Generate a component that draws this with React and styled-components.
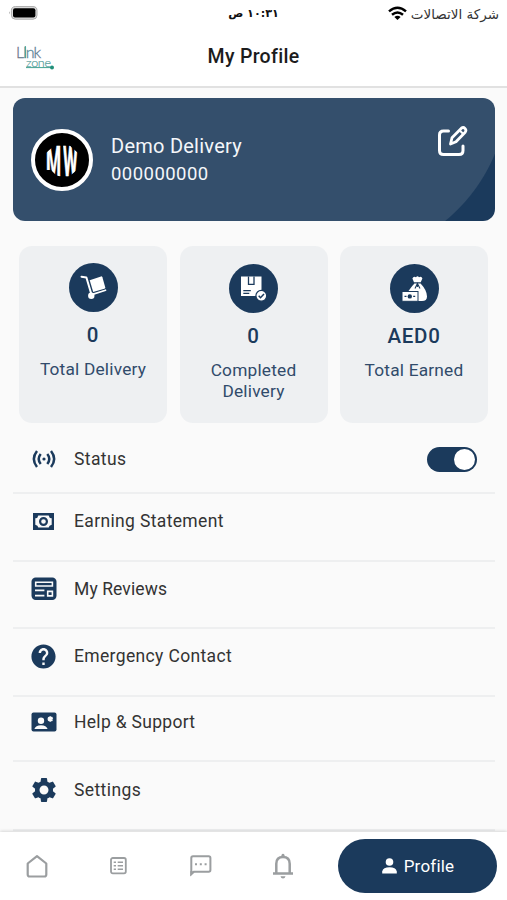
import React, { useState } from 'react';
import styled, { createGlobalStyle } from 'styled-components';
import { MdHelp, MdSettings } from 'react-icons/md';

const NAVY = '#1b3a5c';

const GlobalStyle = createGlobalStyle`
  * {
    box-sizing: border-box;
  }

  body {
    margin: 0;
    background: #fafafa;
    font-family: Roboto, 'DejaVu Sans', sans-serif;
  }

  svg {
    display: block;
    flex-shrink: 0;
  }
`;

const Screen = styled.div`
  width: 507px;
  height: 900px;
  display: flex;
  flex-direction: column;
  background: #fafafa;
  overflow: hidden;
`;

const Header = styled.header`
  height: 88px;
  background: #fff;
  border-bottom: 2px solid #e1e1e1;
  flex-shrink: 0;
`;

const StatusBar = styled.div`
  height: 27px;
  display: grid;
  grid-template-columns: 1fr auto 1fr;
  align-items: center;
  padding: 0 8px;
`;

const Clock = styled.span`
  color: #111;
  font: 700 11.2px 'DejaVu Sans', sans-serif;
  white-space: nowrap;
`;

const Carrier = styled.div`
  display: flex;
  align-items: center;
  justify-content: flex-end;
  gap: 4px;
  color: #333;
  font: 13.5px 'DejaVu Sans', sans-serif;
  white-space: nowrap;
`;

const TitleBar = styled.div`
  height: 59px;
  display: grid;
  grid-template-columns: 1fr auto 1fr;
  align-items: center;
  padding: 0 14px;
`;

const Title = styled.h1`
  margin: 0;
  color: #1c1c1c;
  font-size: 19.5px;
  font-weight: 500;
  letter-spacing: 0.3px;
`;

const ProfileCard = styled.section`
  height: 123px;
  margin: 10px 12px 0 13px;
  padding: 0 27px 0 18px;
  display: flex;
  align-items: center;
  border-radius: 12px;
  background:
    linear-gradient(#344f6c, #344f6c) 0 0 / 325px 100% no-repeat,
    radial-gradient(circle at 323px -10px, #344f6c 171.5px, ${NAVY} 172.5px);
  flex-shrink: 0;
`;

const Avatar = styled.div`
  width: 62px;
  height: 62px;
  border: 4px solid #fff;
  border-radius: 50%;
  background: #000;
  display: flex;
  align-items: center;
  justify-content: center;
`;

const Identity = styled.div`
  flex: 1;
  padding: 2px 0 0 18px;
  color: #f4f7fa;
`;

const Name = styled.div`
  font-size: 20px;
  line-height: 27px;
  letter-spacing: 0.25px;
`;

const Phone = styled.div`
  font-size: 18.5px;
  line-height: 28px;
  letter-spacing: 0.45px;
`;

const EditButton = styled.button`
  align-self: flex-start;
  margin-top: 27px;
  padding: 0;
  border: 0;
  background: none;
`;

const Stats = styled.section`
  display: grid;
  grid-template-columns: repeat(3, 148px);
  gap: 12.5px;
  padding: 25px 0 0 19px;
  flex-shrink: 0;
`;

const StatCard = styled.div`
  height: 177px;
  padding-top: ${props => props.$top || 18}px;
  display: flex;
  flex-direction: column;
  align-items: center;
  border-radius: 13px;
  background: #eef0f2;
  color: ${NAVY};
  text-align: center;
`;

const StatValue = styled.div`
  margin-top: 10px;
  font-size: 20.5px;
  font-weight: 500;
  line-height: 26px;
  letter-spacing: 0.7px;
`;

const StatLabel = styled.div`
  margin-top: 11px;
  color: #314b6b;
  font-size: 17.3px;
  line-height: 21px;
  letter-spacing: 0.2px;
`;

const Menu = styled.main`
  padding: 0 12px 0 13px;
  flex-shrink: 0;
`;

const MenuRow = styled.div`
  height: ${props => props.$height}px;
  padding: ${props => props.$top}px 18px 0 17px;
  display: flex;
  align-items: flex-start;
  border-bottom: 2px solid #eeeff0;
  color: #333;
`;

const RowIcon = styled.div`
  width: 27px;
  height: 28px;
  display: flex;
  align-items: center;
  justify-content: center;
  color: ${NAVY};
`;

const RowLabel = styled.div`
  flex: 1;
  padding-left: 17px;
  font-size: 17.5px;
  line-height: 28px;
  letter-spacing: ${props => props.$spacing}px;
`;

const Switch = styled.button`
  width: 50px;
  height: 25px;
  margin-top: 2px;
  padding: 2px;
  display: flex;
  justify-content: ${props => (props.$on ? 'flex-end' : 'flex-start')};
  border: 0;
  border-radius: 13px;
  background: ${props => (props.$on ? NAVY : '#b6bdc5')};
`;

const Knob = styled.span`
  width: 21px;
  height: 21px;
  border-radius: 50%;
  background: #fff;
`;

const BottomNav = styled.nav`
  height: 68px;
  margin-top: auto;
  padding: 0 10px 1px 26px;
  display: flex;
  align-items: center;
  background: #fff;
  box-shadow: 0 -1px 3px rgba(0, 0, 0, 0.14);
  color: #9b9ea0;
  flex-shrink: 0;
`;

const NavItem = styled.div`
  width: ${props => props.$width}px;
  flex-shrink: 0;
`;

const ProfileTab = styled.button`
  width: 159px;
  height: 54px;
  padding: 0 0 0 1px;
  display: flex;
  align-items: center;
  justify-content: center;
  gap: 7px;
  border: 0;
  border-radius: 27px;
  background: ${NAVY};
  color: #fff;
  font: 400 17px Roboto, sans-serif;
  letter-spacing: 0.2px;
`;

const Battery = () => (
  <svg width="30" height="16" viewBox="0 0 30 16">
    <path d="M2 5.2Q.2 6.7 2 8.2Z" fill="#aaa" />
    <rect x="3.4" y=".6" width="25.6" height="12.6" rx="4" fill="#ddd" stroke="#aaa" />
    <rect x="5" y="2.2" width="22.4" height="9.4" rx="2" fill="#000" />
  </svg>
);

const Wifi = () => (
  <svg width="19" height="16" viewBox="0 0 19 16">
    <g fill="none" stroke="#000" strokeWidth="2.5">
      <path d="M1 5.4Q9.5-1.8 18 5.4" />
      <path d="M4 8.8Q9.5 4.1 15 8.8" />
    </g>
    <path d="M6.4 11Q9.5 8.6 12.6 11L9.5 14Z" fill="#000" />
  </svg>
);

const Logo = () => (
  <svg width="44" height="34" viewBox="0 0 44 34" fontFamily="Lato, sans-serif" fontWeight="300">
    <defs>
      <linearGradient id="word" x1="0" x2="1">
        <stop offset="0" stopColor="#777589" />
        <stop offset=".55" stopColor="#528798" />
        <stop offset="1" stopColor="#66778f" />
      </linearGradient>
    </defs>
    <text x="2" y="17.5" fontSize="16" textLength="25" fill="url(#word)" stroke="url(#word)" strokeWidth=".3">LInk</text>
    <text x="12" y="27" fontSize="12.5" textLength="25" fill="#529b98" stroke="#529b98" strokeWidth=".2">zone</text>
    <path d="M11.3 6v12M12 27.6h25" fill="none" stroke="#40a391" strokeWidth="1" />
    <circle cx="38" cy="27.4" r="2" fill="#218f79" />
  </svg>
);

const Monogram = () => (
  <svg width="54" height="54" viewBox="0 0 54 54">
    <defs>
      <clipPath id="seal">
        <path d="M26 12V44L21 42 16 37H11V20L20 12ZM28 12H34L43 20V36L33 44.5H28Z" />
      </clipPath>
    </defs>
    <g clipPath="url(#seal)" fill="#fff" stroke="#fff" strokeWidth=".6" fontFamily="Roboto, sans-serif" fontWeight="700">
      <text transform="translate(11 42.5) scale(.41 1)" fontSize="42">M</text>
      <text transform="translate(28 42.5) scale(.4 1)" fontSize="42">W</text>
    </g>
  </svg>
);

const EditIcon = () => (
  <svg width="31" height="32" viewBox="0 0 31 32" fill="none" stroke="#fff" strokeWidth="3" strokeLinecap="round" strokeLinejoin="round">
    <path d="M11.5 6H6.5Q2.5 6 2.5 10V25.5Q2.5 29.5 6.5 29.5H22Q26 29.5 26 25.5V21" />
    <path d="M13.5 19L15 12.7 24.4 3.2Q26.3 1.7 28 3.4T28.2 7.2L19 16.8Z" strokeWidth="2.8" />
    <path d="M23.3 6L26 8.7" strokeWidth="2" />
  </svg>
);

const TrolleyIcon = () => (
  <svg width="49" height="49" viewBox="0 0 49 49">
    <circle cx="24.5" cy="24.5" r="24.5" fill={NAVY} />
    <path d="M12.5 13.7L17.4 14.5 22.3 31" fill="none" stroke="#fff" strokeWidth="2" strokeLinecap="round" strokeLinejoin="round" />
    <path d="M20.7 17.2L32 13.4Q33 13.2 33.4 14.2L36.2 24.2Q36.4 25.3 35.4 25.7L24.2 29Z" fill="#fff" />
    <path d="M23.5 31.4L36.5 27.2" stroke="#fff" strokeWidth="1.7" strokeLinecap="round" />
    <circle cx="22.3" cy="32.8" r="3.2" fill="#fff" />
  </svg>
);

const ParcelIcon = () => (
  <svg width="49" height="49" viewBox="0 0 49 49">
    <circle cx="24.5" cy="24.5" r="24.5" fill={NAVY} />
    <path d="M12 12.5h20.5v19.5H12Z" fill="#fff" />
    <path d="M19.5 12.5v7.8h5.5v-7.8M14.3 26.6h7.5M14.3 29.4h6" fill="none" stroke={NAVY} strokeWidth="1.3" />
    <circle cx="32.3" cy="31.8" r="5.4" fill="#fff" stroke={NAVY} strokeWidth="1.2" />
    <path d="M29.7 31.8L31.5 33.7 35 30" fill="none" stroke={NAVY} strokeWidth="1.5" />
  </svg>
);

const MoneyBagIcon = () => (
  <svg width="49" height="49" viewBox="0 0 49 49">
    <circle cx="24.5" cy="24.5" r="24.5" fill={NAVY} />
    <path d="M24 18.2L22.4 14.5Q23.5 11.6 26 13.2 27.5 11.5 29 13.2 31.5 11.7 32.4 14.5L30.7 18.2Z" fill="#fff" />
    <path d="M24.4 19.6H30.6Q37 26.5 37 32.5 37 37 32 37H22.5L18.5 27Q21.5 22.8 24.4 19.6Z" fill="#fff" />
    <path d="M25 24.5L27.4 19.5 30 24.5M27.4 19V23" fill="none" stroke={NAVY} strokeWidth="1.1" />
    <rect x="12" y="27.5" width="16" height="9.8" fill="#fff" stroke={NAVY} strokeWidth="1" />
    <circle cx="19.8" cy="32.4" r="2.2" fill={NAVY} />
    <path d="M14.5 32.4h2M23.2 32.4h2" stroke={NAVY} strokeWidth="1.3" />
  </svg>
);

const StatusIcon = () => (
  <svg width="24" height="20" viewBox="0 0 24 20" fill="none" stroke="currentColor" strokeWidth="2.5">
    <path d="M5 2Q-1.3 10 5 18M19 2Q25.3 10 19 18M8.7 5Q4.7 10 8.7 15M15.3 5Q19.3 10 15.3 15" />
    <circle cx="12" cy="10" r="1.6" fill="currentColor" stroke="none" />
  </svg>
);

const EarningIcon = () => (
  <svg width="21" height="17" viewBox="0 0 21 17">
    <path d="M0 0H21V17H0Z" fill="currentColor" />
    <path d="M5.3 2.4H15.7Q16 5 18.7 5.3V11.7Q16 12 15.7 14.6H5.3Q5 12 2.3 11.7V5.3Q5 5 5.3 2.4Z" fill="#fafafa" />
    <circle cx="10.5" cy="8.5" r="3.4" fill="none" stroke="currentColor" strokeWidth="2.2" />
  </svg>
);

const ReviewIcon = () => (
  <svg width="26" height="24" viewBox="0 0 26 24">
    <rect x=".5" y=".5" width="25" height="22.5" rx="4.2" fill="currentColor" />
    <path d="M4.7 5.2H21.4V9H4.7ZM16.7 14.4H21.4V18.9H16.7Z" fill="currentColor" stroke="#fafafa" strokeWidth="1.6" />
    <path d="M4 13.4H13.4M4 18.7H13.4" stroke="#fafafa" strokeWidth="1.7" />
  </svg>
);

const SupportIcon = () => (
  <svg width="26" height="20" viewBox="0 0 26 20">
    <rect x=".5" y=".5" width="25" height="19" rx="2" fill="currentColor" />
    <circle cx="10" cy="8.7" r="3.2" fill="#fafafa" />
    <path d="M3.4 17Q4.5 13.2 10 13.2T16.6 17Z" fill="#fafafa" />
    <path d="M19.3 4.2V9.8M16.9 5.6L21.7 8.4M21.7 5.6L16.9 8.4" stroke="#fafafa" strokeWidth="2" />
  </svg>
);

const HomeIcon = () => (
  <svg width="22" height="24" viewBox="0 0 22 24" fill="none" stroke="currentColor" strokeWidth="2.2" strokeLinejoin="round">
    <path d="M1.7 9.5L11 2.2 20.3 9.5V20.5Q20.3 22.5 18.3 22.5H3.7Q1.7 22.5 1.7 20.5Z" />
  </svg>
);

const OrdersIcon = () => (
  <svg width="17" height="18" viewBox="0 0 17 18" fill="none" stroke="currentColor">
    <rect x="1" y="1" width="14.8" height="15.4" rx="1.8" strokeWidth="1.8" />
    <path d="M3.7 5.3H6M7.7 5.3H13M3.7 8.8H6M7.7 8.8H13M3.7 12.3H6M7.7 12.3H13" strokeWidth="1.5" />
  </svg>
);

const ChatIcon = () => (
  <svg width="22" height="22" viewBox="0 0 22 22">
    <path d="M1.3 19V3Q1.3 1.3 3 1.3H18.7Q20.4 1.3 20.4 3V15Q20.4 16.7 18.7 16.7H3.8Z" fill="none" stroke="currentColor" strokeWidth="2" />
    <path d="M.3 16V21.4L5 16.7Z" fill="currentColor" />
    <path d="M5 8.2h2v2H5ZM9.8 8.2h2v2h-2ZM14.6 8.2h2v2h-2Z" fill="currentColor" />
  </svg>
);

const BellIcon = () => (
  <svg width="22" height="26" viewBox="0 0 22 26">
    <path d="M4.3 20V10.8Q4.3 4 11 4T17.7 10.8V20" fill="none" stroke="currentColor" strokeWidth="2.5" />
    <path d="M9.4 4V2Q11-.4 12.6 2V4ZM1 19.3H21V21.8H1ZM8.5 23.2H13.5Q13 25.6 11 25.6T8.5 23.2Z" fill="currentColor" />
  </svg>
);

const PersonIcon = () => (
  <svg width="15" height="16" viewBox="0 0 15 16" fill="currentColor">
    <circle cx="7.5" cy="4" r="3.8" />
    <path d="M.2 15.6V13.5Q1.2 9.3 7.5 9.3T14.8 13.5V15.6Z" />
  </svg>
);

const stats = [
  { icon: <TrolleyIcon />, value: '0', label: 'Total Delivery', top: 17 },
  { icon: <ParcelIcon />, value: '0', label: <>Completed<br />Delivery</> },
  { icon: <MoneyBagIcon />, value: 'AED0', label: 'Total Earned' }
];

const menu = [
  { icon: <EarningIcon />, label: 'Earning Statement', height: 68, top: 13, spacing: 0.35 },
  { icon: <ReviewIcon />, label: 'My Reviews', height: 67, top: 13, spacing: 0.1 },
  { icon: <MdHelp size={29} />, label: 'Emergency Contact', height: 68, top: 13, spacing: 0.35 },
  { icon: <SupportIcon />, label: 'Help & Support', height: 65, top: 11, spacing: 0.3 },
  { icon: <MdSettings size={30} />, label: 'Settings', height: 69, top: 14, spacing: 0.4 }
];

const App = () => {
  const [online, setOnline] = useState(true);

  return (
    <Screen>
      <GlobalStyle />
      <Header>
        <StatusBar>
          <Battery />
          <Clock dir="rtl">١٠:٣١ ص</Clock>
          <Carrier>
            <Wifi />
            <span dir="rtl">شركة الاتصالات</span>
          </Carrier>
        </StatusBar>
        <TitleBar>
          <Logo />
          <Title>My Profile</Title>
        </TitleBar>
      </Header>

      <ProfileCard>
        <Avatar><Monogram /></Avatar>
        <Identity>
          <Name>Demo Delivery</Name>
          <Phone>000000000</Phone>
        </Identity>
        <EditButton aria-label="Edit profile"><EditIcon /></EditButton>
      </ProfileCard>

      <Stats>
        {stats.map((stat, idx) => (
          <StatCard key={idx} $top={stat.top}>
            {stat.icon}
            <StatValue>{stat.value}</StatValue>
            <StatLabel>{stat.label}</StatLabel>
          </StatCard>
        ))}
      </Stats>

      <Menu>
        <MenuRow $height={71} $top={22}>
          <RowIcon><StatusIcon /></RowIcon>
          <RowLabel $spacing={0.4}>Status</RowLabel>
          <Switch $on={online} onClick={() => setOnline(!online)} aria-label="Status">
            <Knob />
          </Switch>
        </MenuRow>
        {menu.map(item => (
          <MenuRow key={item.label} $height={item.height} $top={item.top}>
            <RowIcon>{item.icon}</RowIcon>
            <RowLabel $spacing={item.spacing}>{item.label}</RowLabel>
          </MenuRow>
        ))}
      </Menu>

      <BottomNav>
        <NavItem $width={84}><HomeIcon /></NavItem>
        <NavItem $width={80}><OrdersIcon /></NavItem>
        <NavItem $width={82}><ChatIcon /></NavItem>
        <NavItem $width={66}><BellIcon /></NavItem>
        <ProfileTab><PersonIcon />Profile</ProfileTab>
      </BottomNav>
    </Screen>
  );
};

export default App;
